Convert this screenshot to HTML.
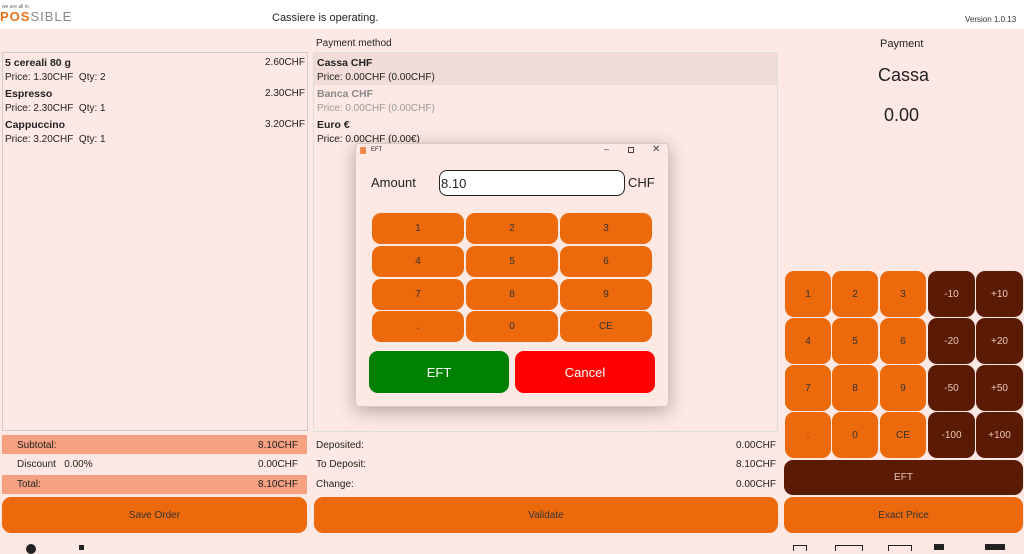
<!DOCTYPE html>
<html><head><style>
*{box-sizing:border-box;margin:0;padding:0}
body{width:1024px;height:550px;overflow:hidden;background:#fde8e4;font-family:"Liberation Sans",sans-serif;font-size:11px;color:#222;position:relative}
.a{position:absolute}
.top{left:0;top:0;width:1024px;height:29px;background:#fff}
.btn{position:absolute;background:#ec6a0c;border-radius:9px;display:flex;align-items:center;justify-content:center;font-size:10px;color:#333}
.dk{background:#5a1a04;color:#e9c7b8}
.row{position:absolute;font-size:10px}
.ic{position:absolute;top:545px;height:6px;border:1.5px solid #222;border-bottom:none}
</style></head><body>
<div class="a top"></div>
<div class="a" style="left:2px;top:4px;font-size:5px;color:#666">we are all in</div>
<div class="a" style="left:0;top:9px;font-size:13px;letter-spacing:1px;color:#888"><span style="color:#e8711a;font-weight:bold">POS</span>SIBLE</div>
<div class="a" style="left:272px;top:12px;font-size:11px;color:#222">Cassiere is operating.</div>
<div class="a" style="left:965px;top:15px;font-size:8px;color:#333">Version 1.0.13</div>

<div class="a" style="left:2px;top:52px;width:306px;height:379px;border:1px solid #ccc;background:#fde8e4"></div>
<div class="a" style="left:5px;top:57px;font-weight:bold;font-size:10.5px">5 cereali 80 g</div><div class="a" style="left:265px;top:57px;font-size:10px">2.60CHF</div>
<div class="a" style="left:5px;top:72px;font-size:10px">Price: 1.30CHF&nbsp; Qty: 2</div>
<div class="a" style="left:5px;top:88px;font-weight:bold;font-size:10.5px">Espresso</div><div class="a" style="left:265px;top:88px;font-size:10px">2.30CHF</div>
<div class="a" style="left:5px;top:103px;font-size:10px">Price: 2.30CHF&nbsp; Qty: 1</div>
<div class="a" style="left:5px;top:119px;font-weight:bold;font-size:10.5px">Cappuccino</div><div class="a" style="left:265px;top:119px;font-size:10px">3.20CHF</div>
<div class="a" style="left:5px;top:134px;font-size:10px">Price: 3.20CHF&nbsp; Qty: 1</div>

<div class="a" style="left:316px;top:38px;font-size:10px">Payment method</div>
<div class="a" style="left:313px;top:52px;width:465px;height:380px;border:1px solid #ddd;background:#fde8e4"></div>
<div class="a" style="left:314px;top:53px;width:463px;height:32px;background:#f2dcd7"></div>
<div class="a" style="left:317px;top:57px;font-weight:bold;font-size:10.5px">Cassa CHF</div>
<div class="a" style="left:317px;top:72px;font-size:10px">Price: 0.00CHF (0.00CHF)</div>
<div class="a" style="left:317px;top:88px;font-weight:bold;font-size:10.5px;color:#888">Banca CHF</div>
<div class="a" style="left:317px;top:103px;font-size:10px;color:#999">Price: 0.00CHF (0.00CHF)</div>
<div class="a" style="left:317px;top:119px;font-weight:bold;font-size:10.5px">Euro €</div>
<div class="a" style="left:317px;top:134px;font-size:10px">Price: 0.00CHF (0.00€)</div>

<div class="a" style="left:880px;top:38px;font-size:11px">Payment</div>
<div class="a" style="left:878px;top:65px;font-size:18px">Cassa</div>
<div class="a" style="left:884px;top:105px;font-size:18px">0.00</div>

<div class="a" style="left:2px;top:435px;width:305px;height:19px;background:#f5a080"></div>
<div class="a" style="left:2px;top:475px;width:305px;height:19px;background:#f5a080"></div>
<div class="row" style="left:17px;top:440px">Subtotal:</div><div class="row" style="left:258px;top:440px">8.10CHF</div>
<div class="row" style="left:17px;top:459px">Discount&nbsp;&nbsp; 0.00%</div><div class="row" style="left:258px;top:459px">0.00CHF</div>
<div class="row" style="left:17px;top:479px">Total:</div><div class="row" style="left:258px;top:479px">8.10CHF</div>
<div class="row" style="left:316px;top:440px">Deposited:</div><div class="row" style="left:736px;top:440px">0.00CHF</div>
<div class="row" style="left:316px;top:459px">To Deposit:</div><div class="row" style="left:736px;top:459px">8.10CHF</div>
<div class="row" style="left:316px;top:479px">Change:</div><div class="row" style="left:736px;top:479px">0.00CHF</div>

<div class="btn" style="left:2px;top:497px;width:305px;height:36px">Save Order</div>
<div class="btn" style="left:314px;top:497px;width:464px;height:36px">Validate</div>
<div class="btn" style="left:784px;top:497px;width:239px;height:36px">Exact Price</div>
<div class="btn dk" style="left:784px;top:460px;width:239px;height:35px">EFT</div>

<div class="btn" style="left:785px;top:271px;width:46px;height:46px">1</div>
<div class="btn" style="left:832px;top:271px;width:46px;height:46px">2</div>
<div class="btn" style="left:880px;top:271px;width:46px;height:46px">3</div>
<div class="btn dk" style="left:928px;top:271px;width:47px;height:46px">-10</div>
<div class="btn dk" style="left:976px;top:271px;width:47px;height:46px">+10</div>
<div class="btn" style="left:785px;top:318px;width:46px;height:46px">4</div>
<div class="btn" style="left:832px;top:318px;width:46px;height:46px">5</div>
<div class="btn" style="left:880px;top:318px;width:46px;height:46px">6</div>
<div class="btn dk" style="left:928px;top:318px;width:47px;height:46px">-20</div>
<div class="btn dk" style="left:976px;top:318px;width:47px;height:46px">+20</div>
<div class="btn" style="left:785px;top:365px;width:46px;height:46px">7</div>
<div class="btn" style="left:832px;top:365px;width:46px;height:46px">8</div>
<div class="btn" style="left:880px;top:365px;width:46px;height:46px">9</div>
<div class="btn dk" style="left:928px;top:365px;width:47px;height:46px">-50</div>
<div class="btn dk" style="left:976px;top:365px;width:47px;height:46px">+50</div>
<div class="btn" style="left:785px;top:412px;width:46px;height:46px">.</div>
<div class="btn" style="left:832px;top:412px;width:46px;height:46px">0</div>
<div class="btn" style="left:880px;top:412px;width:46px;height:46px">CE</div>
<div class="btn dk" style="left:928px;top:412px;width:47px;height:46px">-100</div>
<div class="btn dk" style="left:976px;top:412px;width:47px;height:46px">+100</div>

<!-- bottom icons -->
<div class="a" style="left:26px;top:544px;width:10px;height:10px;border-radius:50%;background:#222"></div>
<div class="a" style="left:79px;top:545px;width:5px;height:5px;background:#222"></div>
<div class="ic" style="left:793px;width:14px"></div>
<div class="ic" style="left:835px;width:28px"></div>
<div class="ic" style="left:888px;width:24px"></div>
<div class="a" style="left:934px;top:544px;width:10px;height:6px;background:#222"></div>
<div class="a" style="left:985px;top:544px;width:20px;height:6px;background:#222"></div>

<!-- dialog -->
<div class="a" style="left:355px;top:143px;width:314px;height:264px;background:#fde8e4;border:1px solid #d8c8c4;border-radius:4px;box-shadow:0 4px 18px rgba(0,0,0,.3)"></div>
<div class="a" style="left:360px;top:147px;width:6px;height:7px;background:#f08a4a;border-radius:1px"></div>
<div class="a" style="left:371px;top:147px;font-size:6px">EFT</div>
<div class="a" style="left:604px;top:144px;font-size:9px;color:#444">–</div>
<div class="a" style="left:628px;top:147px;width:6px;height:6px;border:1px solid #444"></div>
<div class="a" style="left:652px;top:144px;font-size:10px;color:#444">✕</div>
<div class="a" style="left:371px;top:175px;font-size:13px">Amount</div>
<div class="a" style="left:439px;top:170px;width:186px;height:26px;background:#fff;border:1.5px solid #222;border-radius:8px;font-size:13px;padding:5px 1px">8.10</div>
<div class="a" style="left:628px;top:175px;font-size:13px">CHF</div>
<div class="btn" style="left:372px;top:213px;width:92px;height:31px">1</div>
<div class="btn" style="left:466px;top:213px;width:92px;height:31px">2</div>
<div class="btn" style="left:560px;top:213px;width:92px;height:31px">3</div>
<div class="btn" style="left:372px;top:246px;width:92px;height:31px">4</div>
<div class="btn" style="left:466px;top:246px;width:92px;height:31px">5</div>
<div class="btn" style="left:560px;top:246px;width:92px;height:31px">6</div>
<div class="btn" style="left:372px;top:279px;width:92px;height:31px">7</div>
<div class="btn" style="left:466px;top:279px;width:92px;height:31px">8</div>
<div class="btn" style="left:560px;top:279px;width:92px;height:31px">9</div>
<div class="btn" style="left:372px;top:311px;width:92px;height:31px">.</div>
<div class="btn" style="left:466px;top:311px;width:92px;height:31px">0</div>
<div class="btn" style="left:560px;top:311px;width:92px;height:31px">CE</div>
<div class="btn" style="left:369px;top:351px;width:140px;height:42px;background:#008000;color:#fff;font-size:13px">EFT</div>
<div class="btn" style="left:515px;top:351px;width:140px;height:42px;background:#ff0000;color:#fff;font-size:13px">Cancel</div>
</body></html>
